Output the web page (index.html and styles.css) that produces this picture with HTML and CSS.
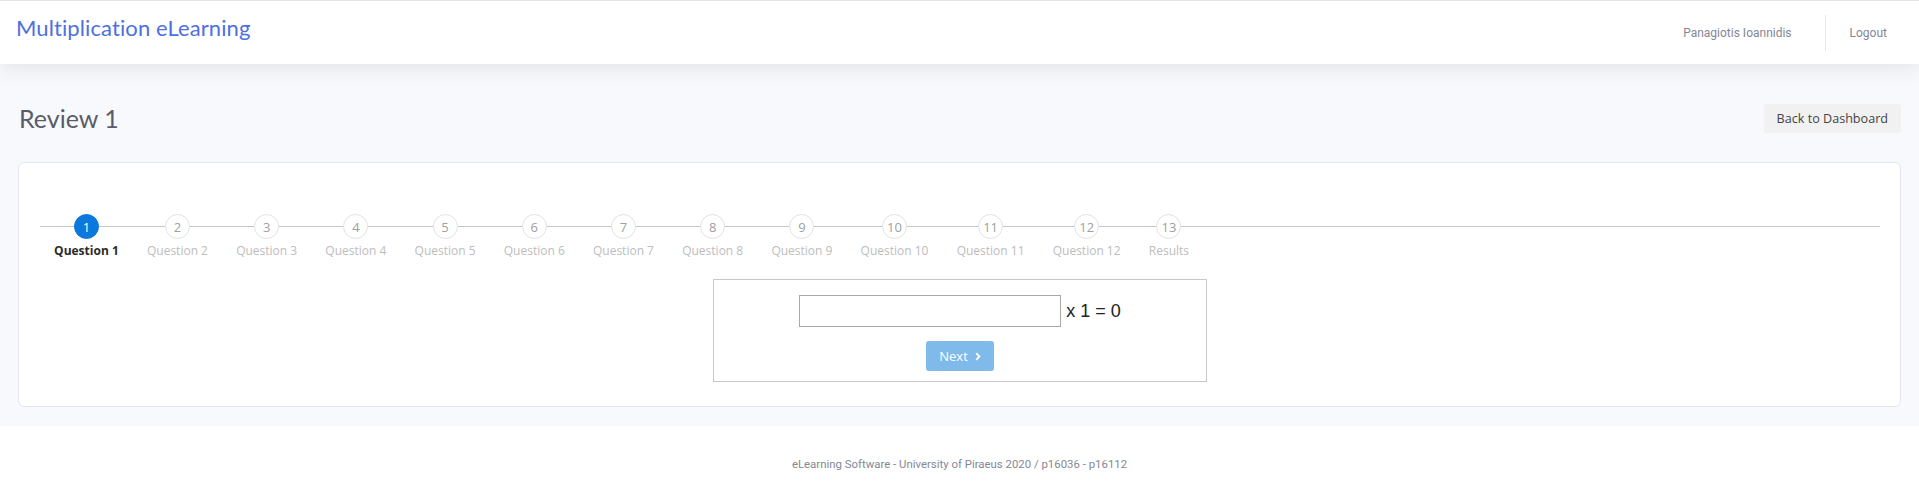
FILE: index.html
```html
<!DOCTYPE html>
<html lang="en">
<head>
<meta charset="utf-8">
<title>Review 1 - Multiplication eLearning</title>
<link rel="stylesheet" href="styles.css">
</head>
<body>
<header class="topbar">
  <a class="brand" href="#">Multiplication eLearning</a>
  <nav class="usernav">
    <a class="nav-link" href="#">Panagiotis Ioannidis</a>
    <span class="divider"></span>
    <a class="nav-link" href="#">Logout</a>
  </nav>
</header>

<main class="content">
  <div class="title-row">
    <h1 class="page-title">Review 1</h1>
    <a class="btn-light" href="#">Back to Dashboard</a>
  </div>

  <section class="card">
    <ul class="stepper">
      <li class="step active"><span class="circle">1</span><span class="label">Question 1</span></li>
      <li class="step"><span class="circle">2</span><span class="label">Question 2</span></li>
      <li class="step"><span class="circle">3</span><span class="label">Question 3</span></li>
      <li class="step"><span class="circle">4</span><span class="label">Question 4</span></li>
      <li class="step"><span class="circle">5</span><span class="label">Question 5</span></li>
      <li class="step"><span class="circle">6</span><span class="label">Question 6</span></li>
      <li class="step"><span class="circle">7</span><span class="label">Question 7</span></li>
      <li class="step"><span class="circle">8</span><span class="label">Question 8</span></li>
      <li class="step"><span class="circle">9</span><span class="label">Question 9</span></li>
      <li class="step"><span class="circle">10</span><span class="label">Question 10</span></li>
      <li class="step"><span class="circle">11</span><span class="label">Question 11</span></li>
      <li class="step"><span class="circle">12</span><span class="label">Question 12</span></li>
      <li class="step"><span class="circle">13</span><span class="label">Results</span></li>
    </ul>

    <div class="question-box">
      <div class="equation"><input class="answer" type="text"> x 1 = 0</div>
      <button class="btn-next" type="button" disabled>Next <svg class="chev" width="6" height="9" viewBox="0 0 6 9"><path d="M1.2 1.2 L4.4 4.5 L1.2 7.8" fill="none" stroke="#fff" stroke-width="1.8"/></svg></button>
    </div>
  </section>
</main>

<footer class="footer">eLearning Software - University of Piraeus 2020 / p16036 - p16112</footer>
</body>
</html>
```

FILE: styles.css
```css
* { box-sizing: border-box; }

body {
  margin: 0;
  background: #fff;
  font-family: "Open Sans", "Liberation Sans", sans-serif;
  color: #333;
}

a { text-decoration: none; }

.topbar {
  height: 64px;
  border-top: 1px solid #e3e3e3;
  background: #fff;
  display: flex;
  justify-content: space-between;
  align-items: flex-start;
  padding: 0 32px 0 16px;
  box-shadow: 0 3px 22px 0 rgba(58, 59, 69, 0.12);
  position: relative;
  z-index: 1;
}

.brand {
  font-family: Lato, "Liberation Sans", sans-serif;
  font-size: 22px;
  color: #4e6fe0;
  line-height: 26px;
  margin-top: 14px;
  letter-spacing: 0.1px;
}

.usernav {
  display: flex;
  align-items: center;
  height: 36px;
  margin-top: 14px;
}

.nav-link {
  font-family: Roboto, "Liberation Sans", sans-serif;
  font-size: 12px;
  color: #858796;
}

.divider {
  width: 1px;
  height: 36px;
  background: #e3e6f0;
  margin: 0 24px 0 33px;
}

.content {
  background: #f8f9fc;
  padding: 36px 18px 19px 18px;
}

.title-row {
  display: flex;
  justify-content: space-between;
  align-items: center;
  height: 36px;
}

.page-title {
  margin: 0;
  font-family: Lato, "Liberation Sans", sans-serif;
  font-weight: 400;
  font-size: 25px;
  color: #5a5c69;
  padding-left: 1px;
}

.btn-light {
  display: inline-block;
  background: #f1f1f1;
  color: #444;
  font-size: 12.6px;
  line-height: 29px;
  height: 29px;
  padding: 0 13px;
  border-radius: 3px;
}

.card {
  margin-top: 26px;
  background: #fff;
  border: 1px solid #e3e6f0;
  border-radius: 6px;
  padding: 51px 20px 24px 21px;
}

.stepper {
  list-style: none;
  margin: 0;
  padding: 0;
  display: flex;
  background: linear-gradient(#c6c6c6, #c6c6c6) no-repeat 0 12px / 100% 1px;
}

.step {
  display: flex;
  flex-direction: column;
  align-items: center;
  padding: 0 14.1px;
}

.circle {
  width: 25px;
  height: 25px;
  border-radius: 50%;
  border: 1px solid #e2e2e2;
  background: #fff;
  color: #a0a0a0;
  font-size: 13px;
  display: flex;
  align-items: center;
  justify-content: center;
}

.label {
  margin-top: 3px;
  font-size: 12px;
  line-height: 17px;
  color: #bdbdbd;
  white-space: nowrap;
}

.step.active .circle {
  background: #0a78dc;
  border-color: #0a78dc;
  color: #fff;
}

.step.active .label {
  color: #2b2b2b;
  font-weight: 700;
}

.question-box {
  width: 494px;
  margin: 20px auto 0;
  border: 1px solid #c8c8c8;
  padding: 15px 0 10px;
  display: flex;
  flex-direction: column;
  align-items: center;
}

.equation {
  font-family: "Liberation Sans", Arial, sans-serif;
  font-size: 18px;
  color: #222;
  line-height: 32px;
  display: flex;
  align-items: center;
  white-space: pre;
}

.answer {
  width: 262px;
  height: 32px;
  border: 1px solid #a9a9a9;
  margin: 0;
  padding: 0 4px;
  font-size: 16px;
}

.btn-next {
  margin-top: 14px;
  width: 68px;
  height: 30px;
  padding: 0;
  border: none;
  border-radius: 3px;
  background: #80baeb;
  color: #fff;
  font-family: "Open Sans", "Liberation Sans", sans-serif;
  font-size: 13px;
  display: flex;
  align-items: center;
  justify-content: center;
  gap: 7px;
}

.chev { display: block; }

.footer {
  height: 77px;
  display: flex;
  align-items: center;
  justify-content: center;
  font-family: Roboto, "Liberation Sans", sans-serif;
  font-size: 11.4px;
  color: #858796;
  padding-bottom: 2px;
}
```
